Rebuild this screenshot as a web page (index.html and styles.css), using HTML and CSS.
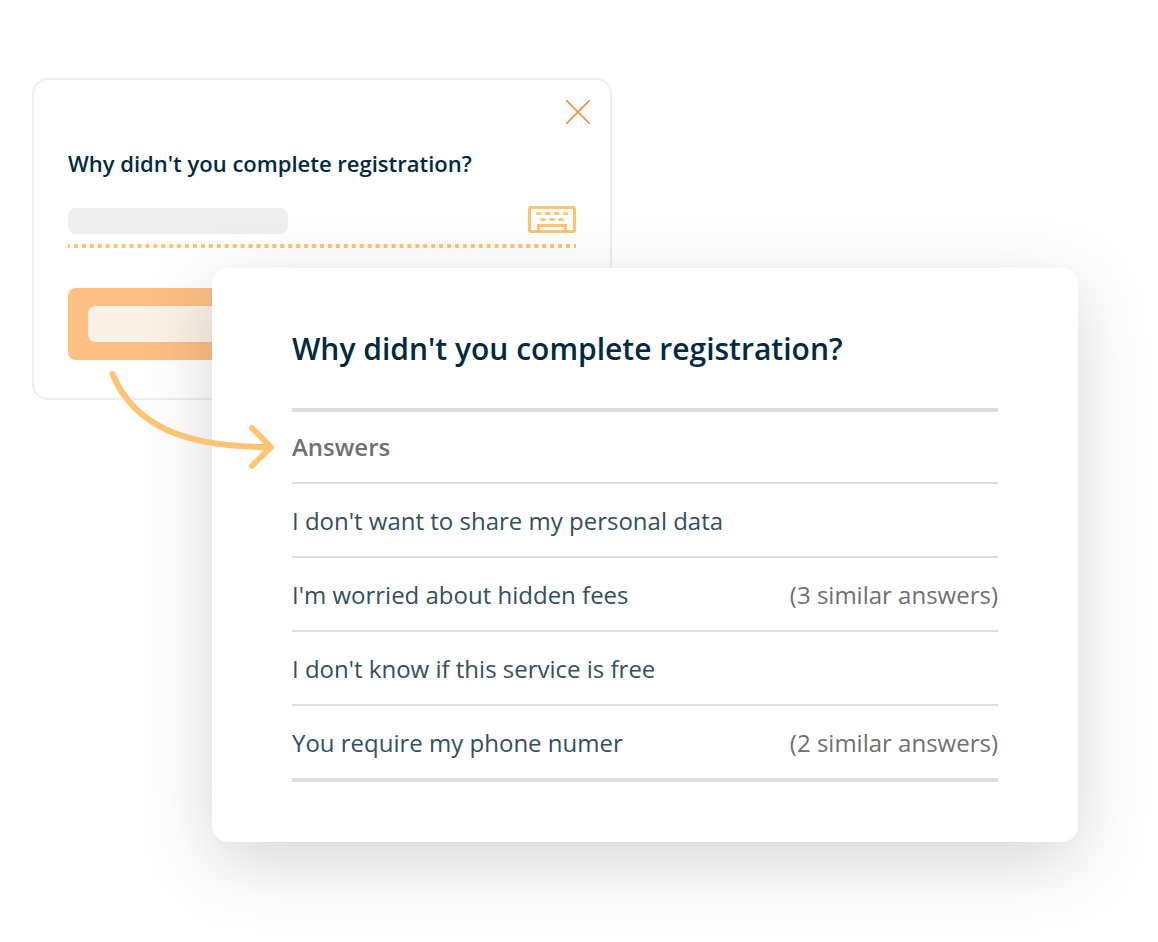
FILE: index.html
```html
<!DOCTYPE html>
<html lang="en">
<head>
<meta charset="utf-8">
<meta name="viewport" content="width=device-width, initial-scale=1">
<title>Survey answers</title>
<link rel="stylesheet" href="styles.css">
</head>
<body>
<main class="scene">
  <form class="survey">
    <button class="close" type="button" aria-label="Close">
      <svg width="24" height="24" viewBox="0 0 24 24" fill="none" stroke="#e88726" stroke-width="1.5"><path d="M0 0L24 24M24 0L0 24"/></svg>
    </button>
    <div class="survey-body">
      <label class="question" for="answer">Why didn't you complete registration?</label>
      <div class="field">
        <input class="answer-input" id="answer" type="text">
        <svg class="keyboard" width="48" height="28" viewBox="0 0 48 28" fill="none" stroke="#fcc473" stroke-width="3">
          <rect x="1.5" y="1.5" width="45" height="24" rx="1.5"/>
          <path d="M10.500 26V19.500H37.500V26"/>
          <path stroke-linecap="round" d="M9.500 7.500h2.500M18.500 7.500h2.500M27.500 7.500h2.500M36.500 7.500h2.500M13.700 13.500h2.500M22.700 13.500h2.500M31.700 13.500h2.500"/>
        </svg>
      </div>
      <button class="submit" type="button" aria-label="Send"><span class="submit-bar"></span></button>
    </div>
  </form>
  <section class="results">
    <h1 class="results-title">Why didn't you complete registration?</h1>
    <table class="answers">
      <thead>
        <tr><th colspan="2" scope="col">Answers</th></tr>
      </thead>
      <tbody>
        <tr><td>I don't want to share my personal data</td><td class="similar"></td></tr>
        <tr><td>I'm worried about hidden fees</td><td class="similar">(3 similar answers)</td></tr>
        <tr><td>I don't know if this service is free</td><td class="similar"></td></tr>
        <tr><td>You require my phone numer</td><td class="similar">(2 similar answers)</td></tr>
      </tbody>
    </table>
    <svg class="arrow" width="168" height="102" viewBox="0 0 168 102" fill="none" stroke="#fcc473" stroke-width="6" stroke-linecap="round" aria-hidden="true">
      <path d="M4.500 6C27 60 80 79 161 79"/>
      <path stroke-linejoin="round" d="M144 60L163 79L144 98"/>
    </svg>
  </section>
</main>
</body>
</html>
```
FILE: styles.css
```css
* { box-sizing: border-box; }

body {
  margin: 0;
  background: #fff;
  color: #002b3f;
  font-family: "Open Sans", "Noto Sans", sans-serif;
}

.scene {
  padding: 78px 80px 100px 32px;
}

.survey {
  display: flex;
  flex-direction: column;
  max-width: 580px;
  padding: 20px 20px 38px;
  border: 2px solid #eee;
  border-radius: 16px;
}

.close {
  align-self: flex-end;
  width: 24px;
  height: 24px;
  padding: 0;
  border: 0;
  background: none;
}

.close svg { display: block; }

.survey-body { padding: 24px 14px 0; }

.question {
  display: block;
  margin-bottom: 28px;
  font-size: 22px;
  font-weight: 600;
  line-height: 30px;
}

.field {
  display: flex;
  align-items: flex-end;
  justify-content: space-between;
  padding-bottom: 14px;
  background: linear-gradient(90deg, #fcc473 25%, transparent 25% 75%, #fcc473 75%) left bottom / 8px 4px round no-repeat;
}

.answer-input {
  width: 220px;
  height: 26px;
  padding: 0 8px;
  border: 0;
  border-radius: 8px;
  background: #eee;
}

.submit {
  display: block;
  width: 240px;
  margin-top: 40px;
  padding: 18px 20px;
  border: 0;
  border-radius: 8px;
  background: #fdc083;
}

.submit-bar {
  display: block;
  height: 36px;
  border-radius: 8px;
  background: #fbf0e6;
}

.results {
  position: relative;
  margin: -132px 0 0 180px;
  padding: 60px 80px;
  border-radius: 16px;
  background: #fff;
  box-shadow: 0 20px 72px rgba(0, 0, 0, 0.17);
}

.results-title {
  margin: 0 0 38px;
  font-size: 30px;
  font-weight: 600;
  line-height: 42px;
}

.answers {
  width: 100%;
  border-spacing: 0;
  font-size: 24px;
  line-height: 32px;
}

.answers th {
  padding: 19px 0;
  border-top: 4px solid #ddd;
  border-bottom: 2px solid #ddd;
  color: #707070;
  font-weight: 600;
  text-align: left;
}

.answers td {
  padding: 21px 0 19px;
  border-bottom: 2px solid #ddd;
  color: #334f5e;
}

.answers .similar {
  color: #707070;
  text-align: right;
}

.answers tr:last-child td { border-bottom-width: 4px; }

.arrow {
  position: absolute;
  top: 100px;
  left: -104px;
}
```
